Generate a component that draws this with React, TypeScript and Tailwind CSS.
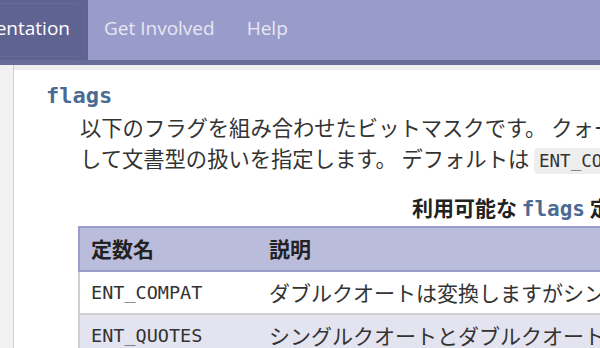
export default function App() {
  const jp = { fontFamily: '"Noto Sans CJK JP", "Noto Sans", sans-serif' };
  const mono = { fontFamily: '"DejaVu Sans Mono", "Liberation Mono", monospace' };

  return (
    <div className="h-[348px] w-[600px] overflow-hidden bg-white" style={jp}>
      {/* top nav */}
      <nav
        className="flex h-[65px] border-b-[5px] border-[#686c99] bg-[#999ccb] text-[19px] text-[#e6e7f2]"
        style={{ fontFamily: '"Open Sans", "Noto Sans", sans-serif' }}
      >
        <div className="w-[88px] shrink-0 bg-[#5f6391] py-[3px] pr-[3px]">
          <div className="flex h-full items-center justify-end overflow-hidden whitespace-nowrap rounded-r-md border border-l-0 border-[#666a98] pb-[3px] pr-[14px] text-white">
            Documentation
          </div>
        </div>
        <div className="flex items-center px-[16px] pb-[3px]">Get Involved</div>
        <div className="flex items-center px-[16px] pb-[3px]">Help</div>
      </nav>

      <div className="flex h-[283px]">
        <div className="w-[14px] shrink-0 border-r border-[#cfcfcf] bg-[#f2f2f2]" />
        <div className="flex-1 overflow-hidden border-t-[5px] border-[#eeeeee] bg-white pl-[33px] pt-[12px] text-[#333]">
          <h3 className="-ml-[1px] text-[22px] font-bold leading-[28px] text-[#4b6a93]" style={mono}>
            flags
          </h3>
          <p className="ml-[33px] whitespace-nowrap pt-[1px] text-[21.3px] leading-[31px] text-[#333]">
            以下のフラグを組み合わせたビットマスクです。 クォートや無効な符号単位列の扱い、そ
            <br />
            して文書型の扱いを指定します。 デフォルトは{' '}
            <code className="rounded bg-[#eeeeee] px-[5px] py-[3px] text-[17.5px] text-[#333]" style={mono}>
              ENT_COMPAT | ENT_HTML401
            </code>
          </p>

          <div className="ml-[31px] mt-[16px] w-[800px]">
            <div className="whitespace-nowrap pl-[334px] text-[21px] font-bold leading-[28px] text-[#222]">
              利用可能な{' '}
              <span className="text-[#4b6a93]" style={mono}>
                flags
              </span>{' '}
              定数
            </div>
            <table className="mt-[3px] w-[800px] table-fixed border-collapse text-[21px]">
              <colgroup>
                <col className="w-[177px]" />
                <col />
              </colgroup>
              <thead>
                <tr className="bg-[#babcdc]">
                  <th className="h-[44px] border-y-2 border-l-2 border-[#9a9ccb] pl-[11px] text-left font-bold text-[#222]">
                    定数名
                  </th>
                  <th className="border-y-2 border-[#9a9ccb] pl-[13px] text-left font-bold text-[#222]">説明</th>
                </tr>
              </thead>
              <tbody>
                <tr className="bg-white">
                  <td className="h-[43px] border-b-2 border-l-2 border-[#d0d0d0] pl-[11px] text-[18.5px]" style={mono}>
                    ENT_COMPAT
                  </td>
                  <td className="border-b-2 border-[#d0d0d0] pl-[13px] whitespace-nowrap">
                    ダブルクオートは変換しますがシングルクオートは変換しません。
                  </td>
                </tr>
                <tr className="bg-[#e4e4f0]">
                  <td className="h-[43px] border-l-2 border-[#d0d0d0] pl-[11px] text-[18.5px]" style={mono}>
                    ENT_QUOTES
                  </td>
                  <td className="pl-[13px] whitespace-nowrap">シングルクオートとダブルクオートを共に変換します。</td>
                </tr>
              </tbody>
            </table>
          </div>
        </div>
      </div>
    </div>
  );
}
